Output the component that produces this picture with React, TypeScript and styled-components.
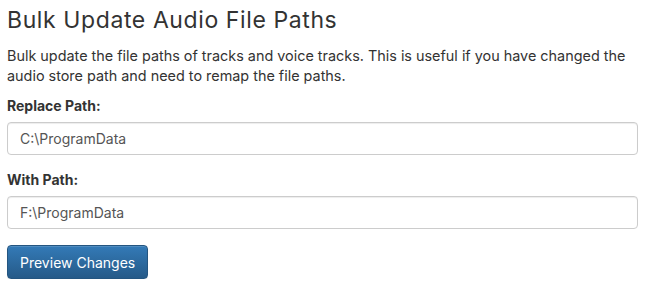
import React from "react";
import styled, { createGlobalStyle } from "styled-components";

const Global = createGlobalStyle`
  html, body { margin: 0; padding: 0; background: #fff; }
  body { font-family: Inter, "Noto Sans", sans-serif; color: #333; }
  * { box-sizing: border-box; }
`;

const Page = styled.div`
  padding: 4px 14px 0 7px;
  display: flex;
  flex-direction: column;
`;

const Title = styled.h1`
  margin: 0;
  font-size: 23px;
  letter-spacing: 0.6px;
  font-weight: 400;
  line-height: 32px;
  color: #333;
`;

const Intro = styled.p`
  margin: 10px 0 10px;
  font-size: 14.4px;
  line-height: 20px;
`;

const Field = styled.div`
  display: flex;
  flex-direction: column;
  margin-bottom: 15px;
`;

const Label = styled.label`
  font-size: 14px;
  font-weight: 700;
  line-height: 20px;
  margin-bottom: 6px;
`;

const Input = styled.input`
  height: 33px;
  padding: 6px 12px;
  font: inherit;
  font-size: 14px;
  color: #555;
  border: 1px solid #ccc;
  border-radius: 4px;
  box-shadow: inset 0 1px 1px rgba(0,0,0,0.075);
  outline: none;
`;

const Button = styled.button`
  align-self: flex-start;
  margin-top: 1px;
  height: 34px;
  padding: 6px 12px;
  font: inherit;
  font-size: 14px;
  color: #fff;
  border: 1px solid #245580;
  border-radius: 4px;
  background-image: linear-gradient(to bottom, #337ab7 0, #265a88 100%);
  box-shadow: inset 0 1px 0 rgba(255,255,255,.15), 0 1px 1px rgba(0,0,0,.075);
`;

export default function App() {
  return (
    <>
      <Global />
      <Page>
        <Title>Bulk Update Audio File Paths</Title>
        <Intro>
          Bulk update the file paths of tracks and voice tracks. This is useful if you have changed the audio store path and need to remap the file paths.
        </Intro>
        <Field>
          <Label>Replace Path:</Label>
          <Input defaultValue="C:\ProgramData" />
        </Field>
        <Field>
          <Label>With Path:</Label>
          <Input defaultValue="F:\ProgramData" />
        </Field>
        <Button>Preview Changes</Button>
      </Page>
    </>
  );
}
